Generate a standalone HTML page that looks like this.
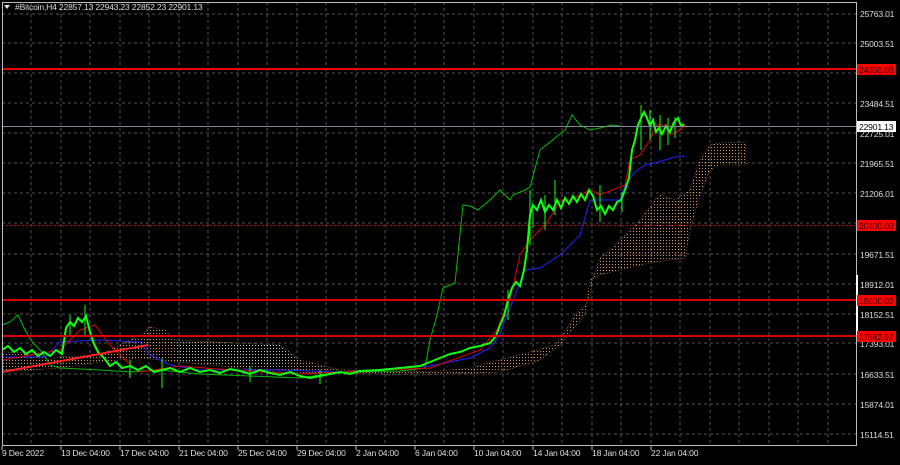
<!DOCTYPE html><html><head><style>
body{margin:0;background:#000;width:900px;height:460px;overflow:hidden;font-family:"Liberation Sans",sans-serif}
svg text{font-family:"Liberation Sans",sans-serif;font-size:8.6px;fill:#ddd;letter-spacing:-0.2px}
</style></head><body>
<svg width="900" height="460" xmlns="http://www.w3.org/2000/svg">
<defs>
<pattern id="dots" width="3" height="3" patternUnits="userSpaceOnUse"><rect width="1" height="1" fill="#d89868"/></pattern>
<pattern id="dotsw" width="3" height="3" patternUnits="userSpaceOnUse"><rect width="1" height="1" fill="#ccc"/></pattern>
</defs>
<rect x="0" y="0" width="900" height="460" fill="#000"/>
<g stroke="#555" stroke-dasharray="3,3" stroke-width="1">
<line x1="2" y1="14" x2="856" y2="14"/><line x1="2" y1="43" x2="856" y2="43"/><line x1="2" y1="73" x2="856" y2="73"/>
<line x1="2" y1="103" x2="856" y2="103"/><line x1="2" y1="133" x2="856" y2="133"/><line x1="2" y1="163" x2="856" y2="163"/>
<line x1="2" y1="193" x2="856" y2="193"/><line x1="2" y1="223" x2="856" y2="223"/><line x1="2" y1="254" x2="856" y2="254"/>
<line x1="2" y1="284" x2="856" y2="284"/><line x1="2" y1="314" x2="856" y2="314"/><line x1="2" y1="343" x2="856" y2="343"/>
<line x1="2" y1="374" x2="856" y2="374"/><line x1="2" y1="404" x2="856" y2="404"/><line x1="2" y1="434" x2="856" y2="434"/>
</g>
<g stroke="#555" stroke-dasharray="3,3">
<line x1="31" y1="2" x2="31" y2="445"/><line x1="61" y1="2" x2="61" y2="445"/><line x1="90" y1="2" x2="90" y2="445"/><line x1="120" y1="2" x2="120" y2="445"/><line x1="149" y1="2" x2="149" y2="445"/><line x1="179" y1="2" x2="179" y2="445"/><line x1="208" y1="2" x2="208" y2="445"/><line x1="238" y1="2" x2="238" y2="445"/><line x1="267" y1="2" x2="267" y2="445"/><line x1="297" y1="2" x2="297" y2="445"/><line x1="326" y1="2" x2="326" y2="445"/><line x1="356" y1="2" x2="356" y2="445"/><line x1="385" y1="2" x2="385" y2="445"/><line x1="415" y1="2" x2="415" y2="445"/><line x1="444" y1="2" x2="444" y2="445"/><line x1="474" y1="2" x2="474" y2="445"/><line x1="503" y1="2" x2="503" y2="445"/><line x1="533" y1="2" x2="533" y2="445"/><line x1="562" y1="2" x2="562" y2="445"/><line x1="592" y1="2" x2="592" y2="445"/><line x1="621" y1="2" x2="621" y2="445"/><line x1="651" y1="2" x2="651" y2="445"/><line x1="680" y1="2" x2="680" y2="445"/><line x1="710" y1="2" x2="710" y2="445"/><line x1="739" y1="2" x2="739" y2="445"/><line x1="769" y1="2" x2="769" y2="445"/><line x1="798" y1="2" x2="798" y2="445"/><line x1="828" y1="2" x2="828" y2="445"/>
</g>
<path d="M2,352 L40,353 50,360 60,357 100,355 140,335 150,327 165,330 175,340 280,345 300,360 340,370 430,372 470,368 500,360 530,352 555,345 563,335 575,315 590,300 592,280 600,258 610,250 640,220 655,200 660,195 675,200 690,190 700,160 710,145 720,143 746,142 L746,165 720,165 710,170 700,195 690,230 685,258 655,262 640,265 600,275 590,280 585,315 572,330 560,345 540,360 500,372 420,375 280,372 160,360 140,358 100,362 60,368 2,372Z" fill="url(#dots)" stroke="#c8885a" stroke-width="0.6" stroke-dasharray="1,2"/>
<path d="M180,342 L280,345 290,355 300,362 260,365 180,362Z" fill="url(#dotsw)"/>
<polyline fill="none" stroke="#0b0" stroke-width="1" points="2,325 10,322 18,315 25,330 33,343 42,352 50,365 60,368 100,370 130,372 160,370 200,374 250,376 300,378 340,372 400,371 425,368 430,340 437,315 443,288 455,283 463,205 470,206 478,210 490,200 500,190 510,200 513,195 525,190 530,187 540,150 565,130 572,115 580,125 590,130 600,128 612,125 620,126"/>
<polyline fill="none" stroke="#22f" stroke-width="1" points="2,357 45,357 60,342 100,340 140,342 150,355 170,365 200,370 280,370 340,372 430,366 470,358 490,348 500,335 505,320 510,308 525,270 540,268 560,255 570,245 580,235 590,200 620,200 625,185 635,172 645,165 655,163 665,160 675,157 685,156"/>
<polyline fill="none" stroke="#d00" stroke-width="1" points="2,360 30,355 60,350 80,330 95,325 110,345 125,360 140,372 180,366 230,370 300,374 380,370 430,368 480,350 497,330 505,310 510,300 520,255 530,240 545,225 555,210 560,200 570,200 590,190 600,195 625,185 630,160 640,155 650,140 657,125 665,125 670,135 680,130 685,125"/>
<polyline fill="none" stroke="#1f1" stroke-width="2" points="2,350 8,346 14,352 20,348 26,354 32,350 38,356 44,352 50,356 56,350 62,354 66,328 70,322 74,326 78,318 82,322 86,316 90,332 94,344 98,352 104,358 110,366 116,362 122,368 130,366 138,370 146,366 154,372 162,370 170,368 180,372 190,368 200,372 210,370 220,373 230,369 240,371 250,374 260,370 270,373 280,375 290,372 300,376 310,378 320,376 330,374 340,372 350,374 360,371 380,370 400,368 420,366 430,362 440,358 450,354 460,352 470,348 480,346 490,343 496,336 500,325 504,316 508,300 512,288 516,282 520,286 524,270 527,250 530,215 533,205 537,210 541,200 545,212 549,205 553,210 557,200 561,208 565,198 569,204 573,196 577,202 581,194 585,200 589,190 593,196 597,210 601,206 605,214 609,206 613,210 617,202 621,200 625,190 629,178 632,150 635,140 638,125 641,118 644,112 647,118 650,126 653,120 656,132 659,128 662,134 666,126 670,132 674,122 678,118 681,126 684,124"/>
<g stroke="#1f1" stroke-width="1">
<line x1="85" y1="305" x2="85" y2="335"/><line x1="162" y1="358" x2="162" y2="388"/><line x1="530" y1="190" x2="530" y2="245"/><line x1="533" y1="210" x2="533" y2="228"/><line x1="600" y1="185" x2="600" y2="222"/><line x1="641" y1="105" x2="641" y2="150"/><line x1="660" y1="115" x2="660" y2="150"/><line x1="675" y1="117" x2="675" y2="138"/><line x1="555" y1="180" x2="555" y2="215"/><line x1="545" y1="195" x2="545" y2="230"/><line x1="70" y1="315" x2="70" y2="335"/><line x1="130" y1="360" x2="130" y2="378"/><line x1="250" y1="366" x2="250" y2="382"/><line x1="320" y1="370" x2="320" y2="384"/><line x1="508" y1="290" x2="508" y2="320"/><line x1="622" y1="192" x2="622" y2="212"/><line x1="650" y1="110" x2="650" y2="140"/><line x1="668" y1="118" x2="668" y2="145"/>
</g>
<line x1="2" y1="69" x2="856" y2="69" stroke="#e00" stroke-width="2"/>
<line x1="2" y1="225.5" x2="856" y2="225.5" stroke="#c00" stroke-width="1" stroke-dasharray="2,2"/>
<line x1="2" y1="300" x2="856" y2="300" stroke="#d00" stroke-width="2"/>
<line x1="2" y1="336" x2="856" y2="336" stroke="#d00" stroke-width="2"/>
<line x1="2" y1="372" x2="148" y2="345" stroke="#f22" stroke-width="2"/>
<line x1="2" y1="126.5" x2="856" y2="126.5" stroke="#889" stroke-width="1"/>
<rect x="2.5" y="2.5" width="854" height="443" fill="none" stroke="#bbb" stroke-width="1"/>
<rect x="856" y="275" width="2" height="60" fill="#fff"/>
<text x="15" y="10">#Bitcoin,H4  22857.13 22943.23 22852.23 22901.13</text>
<path d="M4,5 L10,5 7,9Z" fill="#ddd"/>
<g>
<text x="860" y="17">25763.01</text><text x="860" y="47">25003.51</text><text x="860" y="107">23484.51</text><text x="860" y="137">22725.01</text><text x="860" y="167">21965.51</text><text x="860" y="197">21206.01</text><text x="860" y="258">19671.51</text><text x="860" y="288">18912.01</text><text x="860" y="318">18152.51</text><text x="860" y="347">17393.01</text><text x="860" y="378">16633.51</text><text x="860" y="408">15874.01</text><text x="860" y="438">15114.51</text>
</g>
<rect x="857" y="64" width="39" height="11" fill="#f00"/><text x="859" y="73" style="fill:#300">24350.00</text>
<rect x="857" y="121" width="39" height="11" fill="#fff"/><text x="859" y="130" style="fill:#000">22901.13</text>
<rect x="857" y="220" width="39" height="11" fill="#f00"/><text x="859" y="229" style="fill:#300">20400.00</text>
<rect x="857" y="295" width="39" height="11" fill="#f00"/><text x="859" y="304" style="fill:#300">18500.00</text>
<rect x="857" y="331" width="39" height="11" fill="#f00"/><text x="859" y="340" style="fill:#300">17582.97</text>
<g stroke="#bbb"><line x1="2" y1="446" x2="2" y2="450"/><line x1="61" y1="446" x2="61" y2="450"/><line x1="120" y1="446" x2="120" y2="450"/><line x1="179" y1="446" x2="179" y2="450"/><line x1="238" y1="446" x2="238" y2="450"/><line x1="297" y1="446" x2="297" y2="450"/><line x1="356" y1="446" x2="356" y2="450"/><line x1="415" y1="446" x2="415" y2="450"/><line x1="474" y1="446" x2="474" y2="450"/><line x1="533" y1="446" x2="533" y2="450"/><line x1="592" y1="446" x2="592" y2="450"/><line x1="651" y1="446" x2="651" y2="450"/></g>
<text x="2" y="456">9 Dec 2022</text><text x="61" y="456">13 Dec 04:00</text><text x="120" y="456">17 Dec 04:00</text><text x="179" y="456">21 Dec 04:00</text><text x="238" y="456">25 Dec 04:00</text><text x="297" y="456">29 Dec 04:00</text><text x="356" y="456">2 Jan 04:00</text><text x="415" y="456">6 Jan 04:00</text><text x="474" y="456">10 Jan 04:00</text><text x="533" y="456">14 Jan 04:00</text><text x="592" y="456">18 Jan 04:00</text><text x="651" y="456">22 Jan 04:00</text>
</svg>
</body></html>
